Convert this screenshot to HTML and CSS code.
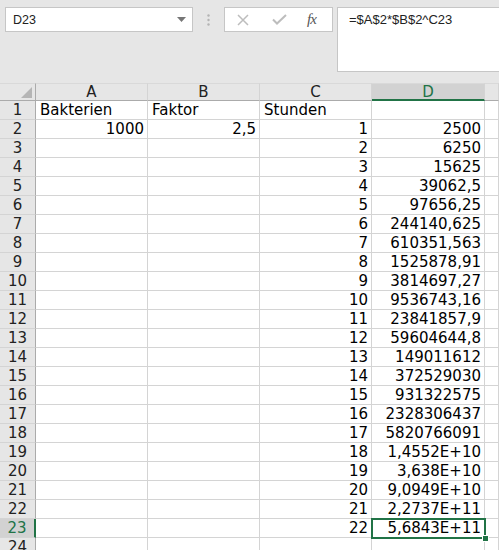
FILE: index.html
```html
<!DOCTYPE html>
<html lang="de">
<head>
  <meta charset="UTF-8">
  <title>Bakterien</title>
  <link rel="stylesheet" href="styles.css">
</head>
<body>
  <div class="topbar">
    <div class="namebox">
      <span>D23</span>
      <svg class="drop" width="9" height="5" viewBox="0 0 9 5"><path d="M0 0h9L4.5 5z" fill="#767676"/></svg>
    </div>
    <div class="grip">
      <svg width="3" height="12" viewBox="0 0 3 12"><circle cx="1.5" cy="1.5" r="1.2" fill="#b4b4b4"/><circle cx="1.5" cy="6" r="1.2" fill="#b4b4b4"/><circle cx="1.5" cy="10.5" r="1.2" fill="#b4b4b4"/></svg>
    </div>
    <div class="buttons">
      <svg width="12" height="12" viewBox="0 0 12 12"><path d="M1 1l10 10M11 1L1 11" stroke="#bdbdbd" stroke-width="1.5"/></svg>
      <svg width="15" height="11" viewBox="0 0 15 11"><path d="M1 5.5l4 4L14 1" stroke="#bdbdbd" stroke-width="2" fill="none"/></svg>
      <span class="fx">fx</span>
    </div>
    <div class="formula">=$A$2*$B$2^C23</div>
  </div>

  <div class="sheet" id="sheet"></div>

  <script>
    // column E only peeks in at the right edge, its letter is off screen
    const cols = ['A', 'B', 'C', 'D', ''];
    const dValues = [
      '2500', '6250', '15625', '39062,5', '97656,25', '244140,625', '610351,563',
      '1525878,91', '3814697,27', '9536743,16', '23841857,9', '59604644,8',
      '149011612', '372529030', '931322575', '2328306437', '5820766091',
      '1,4552E+10', '3,638E+10', '9,0949E+10', '2,2737E+11', '5,6843E+11'
    ];

    const rows = [];
    rows.push(['Bakterien', 'Faktor', 'Stunden', '', '']);
    dValues.forEach((v, i) => {
      rows.push([i === 0 ? '1000' : '', i === 0 ? '2,5' : '', String(i + 1), v, '']);
    });
    rows.push(['', '', '', '', '']);

    let html = '<div class="corner"><span class="tri"></span></div>';
    cols.forEach(c => {
      html += `<div class="colhead${c === 'D' ? ' active' : ''}">${c}</div>`;
    });
    rows.forEach((r, i) => {
      const n = i + 1;
      html += `<div class="rowhead${n === 23 ? ' active' : ''}">${n}</div>`;
      r.forEach((val, j) => {
        const isNum = n > 1 && val !== '';
        const sel = n === 23 && j === 3 ? ' selected' : '';
        html += `<div class="cell${isNum ? ' num' : ''}${sel}">${val}</div>`;
      });
    });
    document.getElementById('sheet').innerHTML = html;
  </script>
</body>
</html>
```

FILE: styles.css
```css
body { margin: 0; background: #fff; font-family: "DejaVu Sans", sans-serif; overflow: hidden; }

.topbar { height: 83px; background: #e6e6e6; display: flex; align-items: flex-start; padding: 7px 0 0 5px; box-sizing: border-box; font-family: "Liberation Sans", Arial, sans-serif; }
.namebox { width: 188px; height: 25px; box-sizing: border-box; background: #fff; border: 1px solid #c6c6c6; display: flex; align-items: center; justify-content: space-between; padding: 0 6px 0 7px; font-size: 12.5px; color: #222; }
.grip { width: 31px; height: 25px; display: flex; align-items: center; justify-content: center; }
.buttons { width: 109px; height: 25px; box-sizing: border-box; background: #fff; border: 1px solid #c6c6c6; display: flex; align-items: center; gap: 0; padding: 0 0 0 12px; }
.buttons svg:first-child { margin-right: 23px; }
.buttons svg:nth-child(2) { margin-right: 20px; }
.fx { font-family: "Liberation Serif", serif; font-style: italic; font-size: 15px; color: #555; letter-spacing: -1px; }
.formula { flex: 1; margin-left: 4px; height: 65px; box-sizing: border-box; background: #fff; border: 1px solid #c6c6c6; border-right: none; padding: 4px 11px; font-size: 13px; color: #222; }

.sheet { display: grid; grid-template-columns: 36px 112px 112px 112px 113px 1fr; grid-template-rows: 18px; grid-auto-rows: 19px; font-size: 15px; }
.sheet > div { box-sizing: border-box; border-right: 1px solid #d4d4d4; border-bottom: 1px solid #d4d4d4; white-space: nowrap; overflow: hidden; }

.corner { background: #e6e6e6; border-right-color: #ababab !important; border-bottom-color: #ababab !important; border-top: 1px solid #d9d9d9; position: relative; }
.tri { position: absolute; right: 3px; bottom: 2px; width: 0; height: 0; border-left: 11px solid transparent; border-bottom: 11px solid #b5b5b5; }
.colhead { background: #e6e6e6; border-top: 1px solid #d9d9d9; border-bottom-color: #ababab !important; text-align: center; line-height: 17px; color: #222; }
.colhead.active { background: #d2d2d2; color: #217346; border-bottom: 2px solid #217346 !important; }
.rowhead { background: #e6e6e6; border-right-color: #ababab !important; text-align: center; line-height: 19px; color: #222; }
.rowhead.active { background: #d2d2d2; color: #217346; border-right: 2px solid #217346 !important; }

.cell { padding: 0 4px; line-height: 19px; color: #000; }
.cell.num { text-align: right; padding-right: 3px; }
.cell.selected { outline: 2px solid #217346; outline-offset: -1px; position: relative; overflow: visible !important; z-index: 1; }
.cell.selected::after { content: ""; position: absolute; right: -5px; bottom: -5px; width: 5px; height: 5px; background: #217346; border: 1px solid #fff; }
```
